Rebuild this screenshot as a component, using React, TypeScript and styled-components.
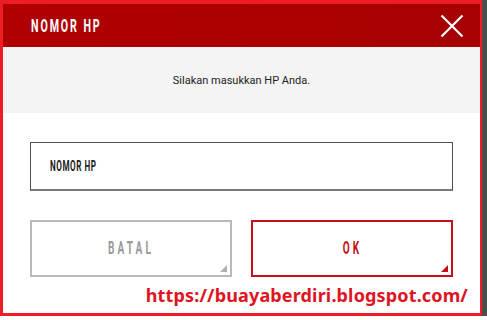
import React from "react";
import styled, { createGlobalStyle } from "styled-components";

const Global = createGlobalStyle`
  html, body { margin: 0; padding: 0; background: #ffffff; }
  body { font-family: Roboto, "Liberation Sans", sans-serif; }
`;

const Page = styled.div`
  display: flex;
  align-items: flex-start;
  width: 487px;
  height: 320px;
  background: #ffffff;
`;

const Frame = styled.div`
  width: 477px;
  height: 309px;
  border-style: solid;
  border-color: #ee1c25;
  border-width: 4px 2px 3px 3px;
  display: flex;
  flex-direction: column;
  background: #ffffff;
`;

const Shade = styled.div`
  width: 5px;
  height: 316px;
  background: #4d4d4d;
`;

const Header = styled.div`
  height: 43px;
  flex: none;
  display: flex;
  align-items: center;
  justify-content: space-between;
  padding: 0 16px 0 28px;
  background: linear-gradient(90deg, #b00002 0%, #ab0000 60%, #a60002 100%);
`;

const Condensed = styled.span<{ $size: number; $spacing: number; $color: string; $scale: number }>`
  display: inline-block;
  font-family: Roboto, "Liberation Sans", sans-serif;
  font-weight: 700;
  font-size: ${(p) => p.$size}px;
  letter-spacing: ${(p) => p.$spacing}px;
  color: ${(p) => p.$color};
  line-height: 1;
  transform: scaleX(${(p) => p.$scale});
`;

const Title = styled(Condensed)`
  transform-origin: left center;
`;

const CloseButton = styled.button`
  width: 24px;
  height: 24px;
  padding: 0;
  border: 0;
  background: transparent;
  display: flex;
  align-items: center;
  justify-content: center;
`;

const Message = styled.div`
  height: 66px;
  flex: none;
  background: #f4f4f4;
  display: flex;
  align-items: center;
  justify-content: center;
  font-family: Roboto, "Liberation Sans", sans-serif;
  font-size: 11px;
  color: #222222;
`;

const Body = styled.div`
  display: flex;
  flex-direction: column;
  padding: 29px 27px 0 27px;
`;

const InputBox = styled.div`
  height: 46px;
  border: 1px solid #4f4f4f;
  border-bottom: 2px solid #7a7a7a;
  display: flex;
  align-items: center;
  padding-left: 19px;
`;

const InputLabel = styled(Condensed)`
  transform-origin: left center;
`;

const ButtonRow = styled.div`
  display: grid;
  grid-template-columns: 1fr 1fr;
  gap: 19px;
  margin-top: 29px;
`;

const DialogButton = styled.button<{ $tone: string }>`
  position: relative;
  height: 57px;
  border: 2px solid ${(p) => p.$tone};
  background: #ffffff;
  display: flex;
  align-items: center;
  justify-content: center;
  padding: 0;
  padding-bottom: 1px;
`;

const Corner = styled.span<{ $tone: string }>`
  position: absolute;
  right: 3px;
  bottom: 3px;
  width: 0;
  height: 0;
  border-style: solid;
  border-width: 0 0 7px 7px;
  border-color: transparent transparent ${(p) => p.$tone} transparent;
`;

const Footer = styled.div`
  display: flex;
  justify-content: flex-end;
  padding-right: 12px;
  margin-top: 6px;
`;

const Link = styled.span`
  font-family: "Noto Sans", "Open Sans", sans-serif;
  font-weight: 700;
  font-size: 18px;
  line-height: 24px;
  color: #e0131f;
  letter-spacing: 0.15px;
`;

export default function App() {
  return (
    <>
      <Global />
      <Page>
        <Frame>
          <Header>
            <Title $size={19} $spacing={3.4} $color="#ffffff" $scale={0.56}>
              NOMOR HP
            </Title>
            <CloseButton aria-label="close">
              <svg width="24" height="24" viewBox="0 0 24 24">
                <path d="M1.5 1.5 L22.5 22.5 M22.5 1.5 L1.5 22.5" stroke="#ffffff" strokeWidth="2.2" fill="none" />
              </svg>
            </CloseButton>
          </Header>
          <Message>Silakan masukkan HP Anda.</Message>
          <Body>
            <InputBox>
              <InputLabel $size={15} $spacing={1} $color="#222222" $scale={0.54}>
                NOMOR HP
              </InputLabel>
            </InputBox>
            <ButtonRow>
              <DialogButton $tone="#b9b9b9">
                <Condensed $size={18} $spacing={5.5} $color="#9a9a9a" $scale={0.56}>
                  BATAL
                </Condensed>
                <Corner $tone="#b0b0b0" />
              </DialogButton>
              <DialogButton $tone="#c4101a">
                <Condensed $size={18} $spacing={5.5} $color="#c4101a" $scale={0.56}>
                  OK
                </Condensed>
                <Corner $tone="#c4101a" />
              </DialogButton>
            </ButtonRow>
          </Body>
          <Footer>
            <Link>https://buayaberdiri.blogspot.com/</Link>
          </Footer>
        </Frame>
        <Shade />
      </Page>
    </>
  );
}
